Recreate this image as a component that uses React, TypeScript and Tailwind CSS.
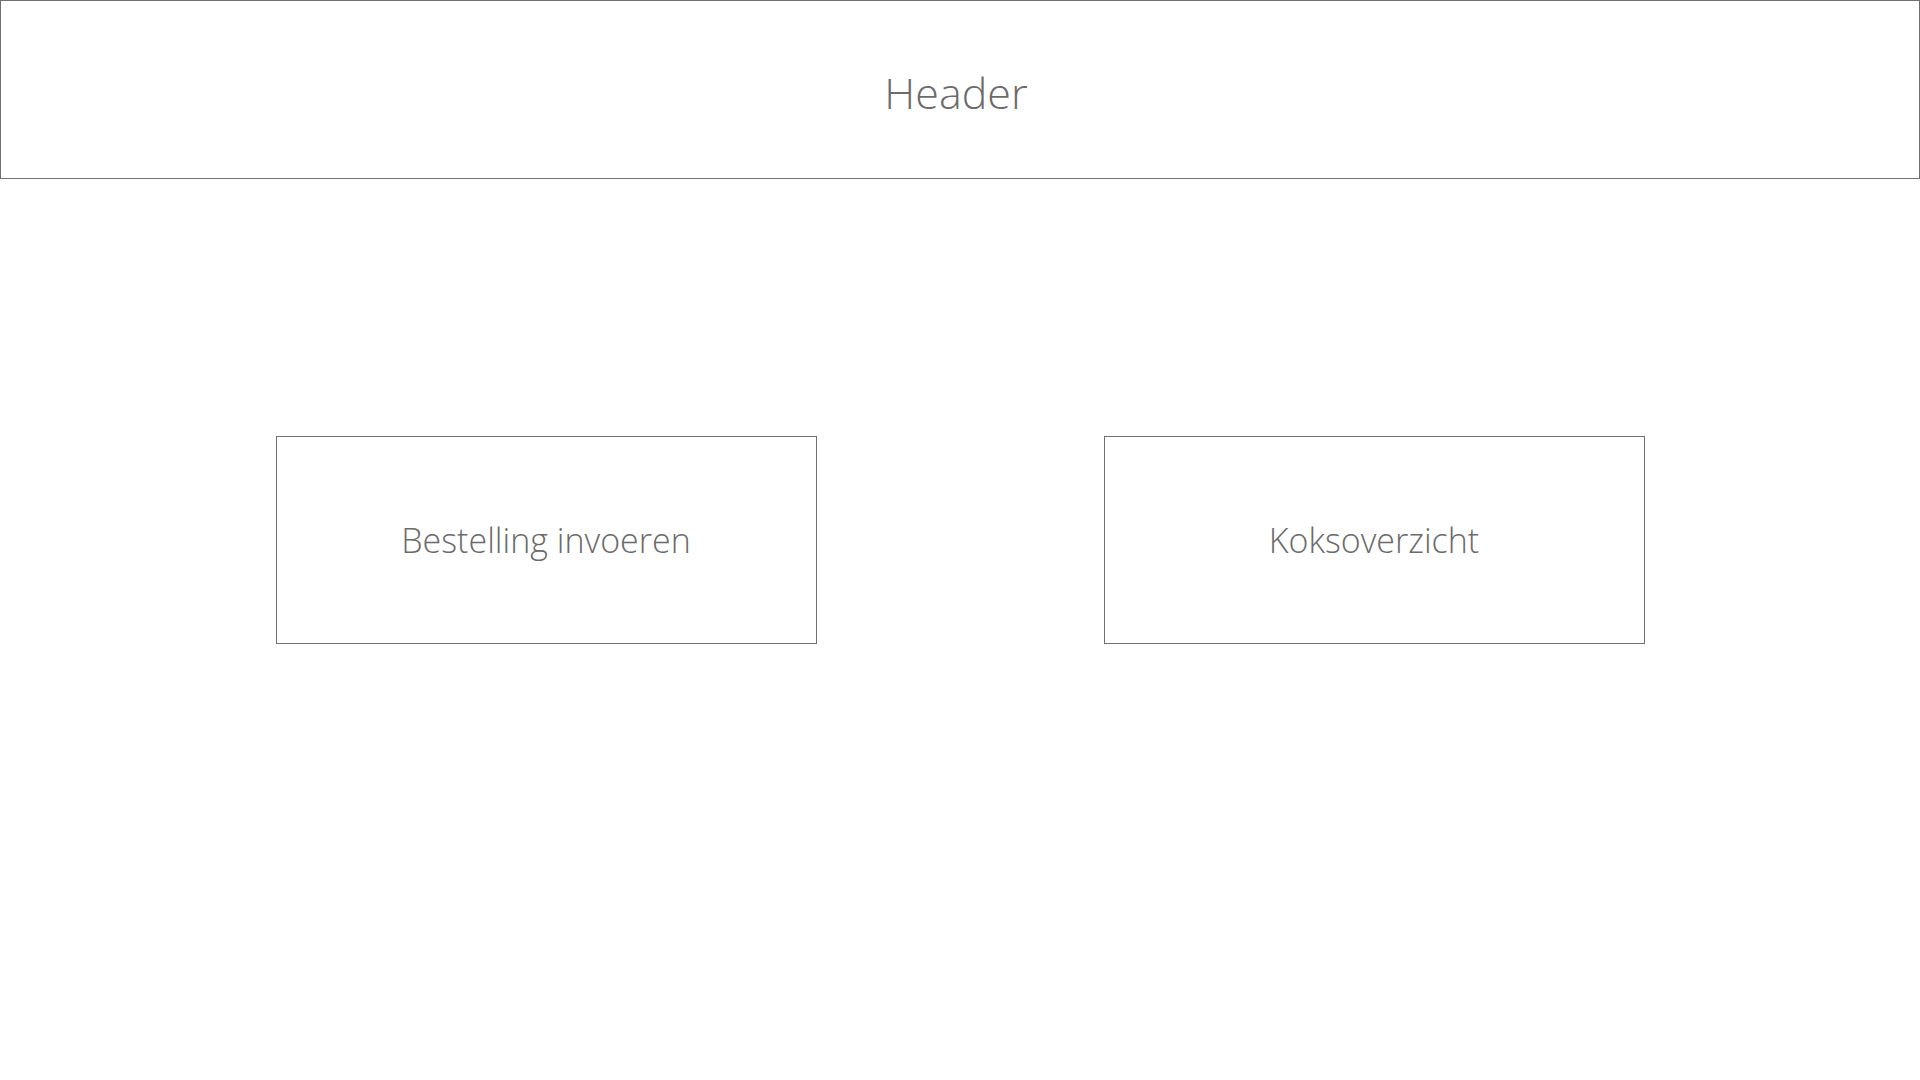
const tiles = ["Bestelling invoeren", "Koksoverzicht"];

export default function App() {
  return (
    <div className="min-h-screen bg-white text-[#6b6b6b] font-['Open_Sans',sans-serif]">
      <header className="flex h-[179px] items-center justify-center border border-[#707070]">
        <h1 className="mt-[6px] mr-[8px] text-[43px] font-[350] leading-none">Header</h1>
      </header>
      <main className="mt-[257px] flex justify-center gap-[287px]">
        {tiles.map((label) => (
          <button
            key={label}
            className="flex h-[208px] w-[541px] items-center justify-center border border-[#707070] bg-white text-[34px] font-[350]"
          >
            {label}
          </button>
        ))}
      </main>
    </div>
  );
}
